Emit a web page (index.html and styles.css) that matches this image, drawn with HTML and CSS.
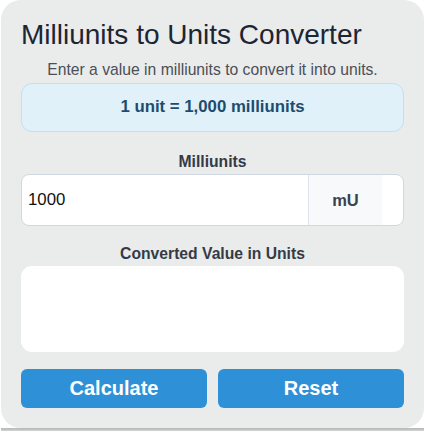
FILE: index.html
```html
<!DOCTYPE html>
<html lang="en">
<head>
<meta charset="utf-8">
<title>Milliunits to Units Converter</title>
<link rel="stylesheet" href="styles.css">
</head>
<body>
<div class="wrap">
  <div class="card">
    <h1 class="title">Milliunits to Units Converter</h1>
    <p class="subtitle">Enter a value in milliunits to convert it into units.</p>
    <div class="info">1 unit = 1,000 milliunits</div>
    <label class="label label-first" for="mu">Milliunits</label>
    <div class="input-group">
      <input id="mu" class="input" type="text" value="1000">
      <span class="addon">mU</span>
      <span class="filler"></span>
    </div>
    <div class="label label-second">Converted Value in Units</div>
    <div class="output"></div>
    <div class="buttons">
      <button class="btn" type="button">Calculate</button>
      <button class="btn" type="button">Reset</button>
    </div>
  </div>
  <div class="shadow"></div>
</div>
</body>
</html>
```

FILE: styles.css
```css
* { box-sizing: border-box; }

html, body {
  margin: 0;
  padding: 0;
  background: #ffffff;
  font-family: "Liberation Sans", Arial, sans-serif;
}

.wrap {
  width: 423px;
  margin-left: 1px;
}

.card {
  background: #eaebeb;
  border-radius: 20px;
  padding: 19px 20px 20px;
  display: flex;
  flex-direction: column;
}

.shadow {
  height: 3px;
  background: linear-gradient(#b4b4b4, #d4d4d4);
}

.title {
  margin: 0;
  font-size: 28px;
  line-height: 32px;
  font-weight: normal;
  color: #1c2533;
}

.subtitle {
  margin: 9px 0 3px;
  font-size: 15.7px;
  line-height: 20px;
  text-align: center;
  color: #4b5058;
}

.info {
  background: #e0f1fa;
  border: 1px solid #bfe1f5;
  border-radius: 11px;
  padding: 13px 10px 14px;
  font-size: 16.8px;
  line-height: 20px;
  font-weight: bold;
  text-align: center;
  color: #1d4c6e;
}

.label {
  font-size: 15.7px;
  line-height: 20px;
  font-weight: bold;
  text-align: center;
  color: #343b47;
  margin-bottom: 2px;
}

.label-first { margin-top: 20px; }
.label-second { margin-top: 18px; }

.input-group {
  display: flex;
  height: 52px;
  background: #ffffff;
  border: 1px solid #cfd7e2;
  border-radius: 8px;
  overflow: hidden;
}

.input {
  flex: 1;
  min-width: 0;
  border: 0;
  outline: none;
  background: transparent;
  padding: 0 6px;
  font-family: "Liberation Sans", Arial, sans-serif;
  font-size: 16.8px;
  color: #111111;
}

.addon {
  width: 74px;
  display: flex;
  align-items: center;
  justify-content: center;
  background: #f7f9fb;
  border-left: 1px solid #dde3eb;
  font-size: 16.5px;
  font-weight: bold;
  color: #3a4150;
}

.filler {
  width: 21px;
}

.output {
  height: 86px;
  background: #ffffff;
  border-radius: 11px;
}

.buttons {
  display: flex;
  gap: 11px;
  margin-top: 17px;
}

.btn {
  flex: 1;
  height: 39px;
  border: 0;
  border-radius: 6px;
  background: #2e90d6;
  color: #ffffff;
  font-family: "Liberation Sans", Arial, sans-serif;
  font-size: 20px;
  font-weight: bold;
  padding: 0;
}
```
